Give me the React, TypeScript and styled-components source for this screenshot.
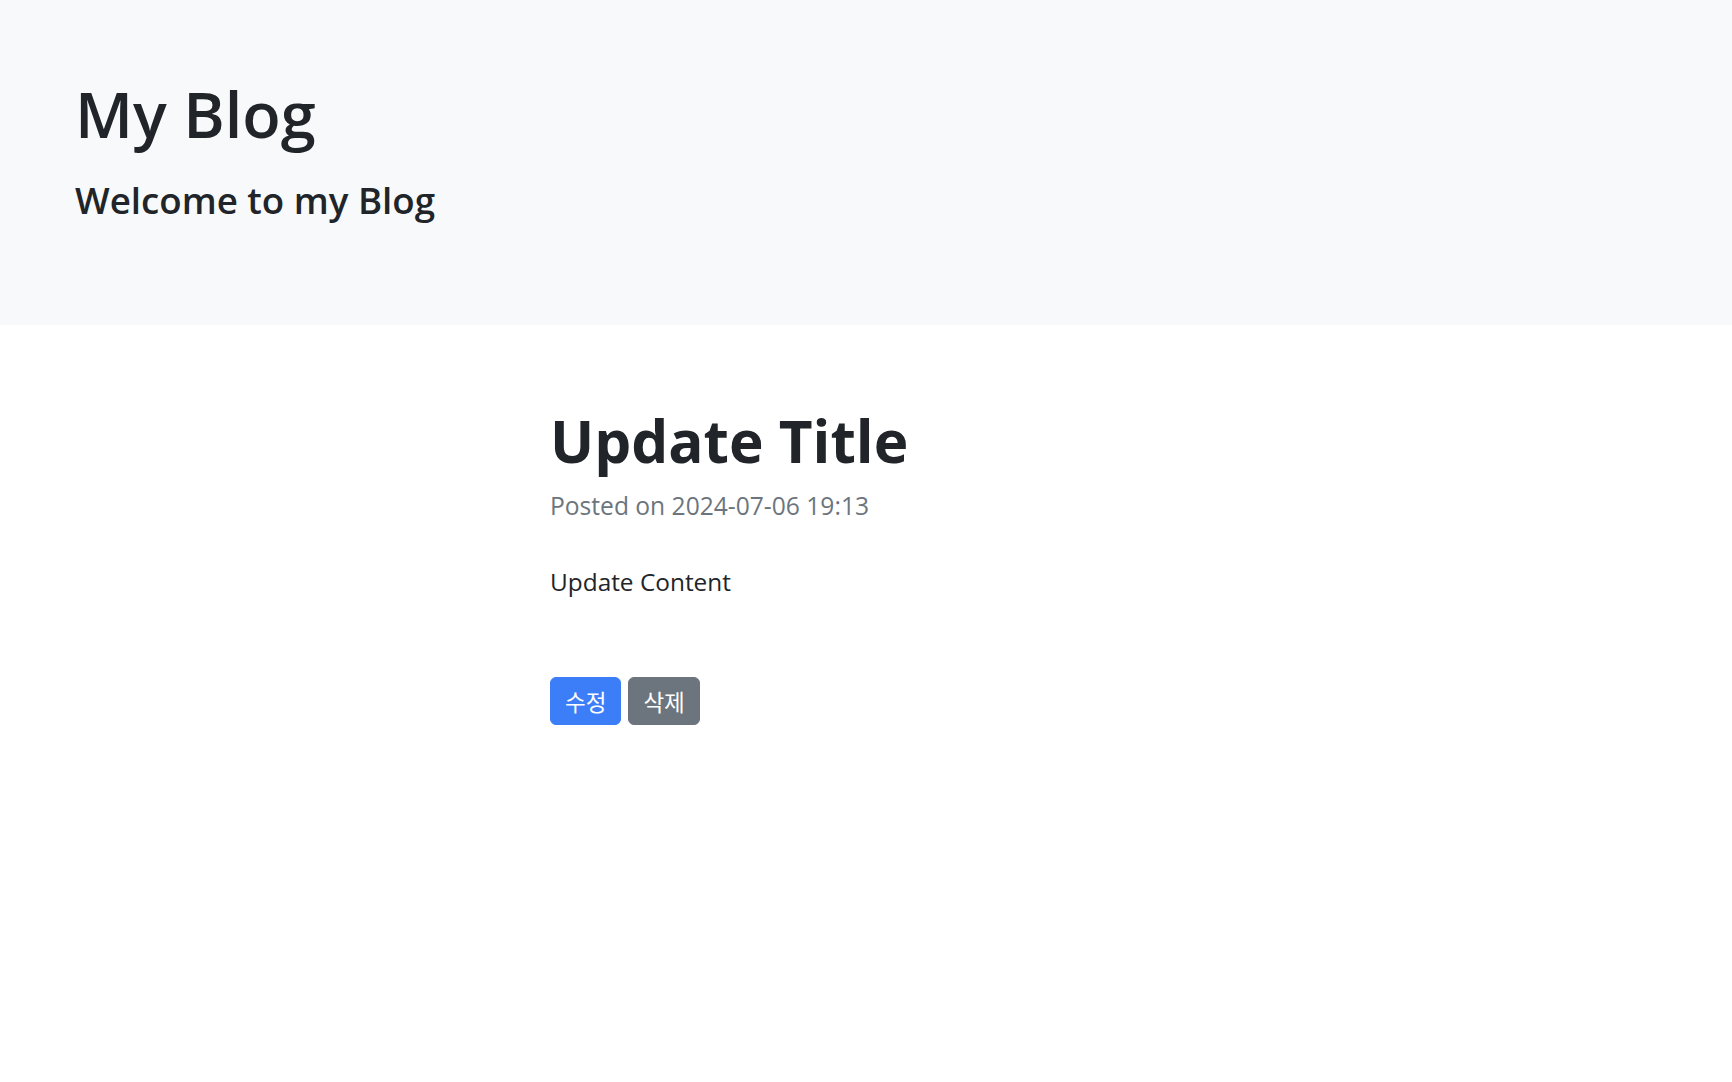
import React from "react";
import styled, { createGlobalStyle } from "styled-components";

const GlobalStyle = createGlobalStyle`
  html, body { margin: 0; padding: 0; background: #ffffff; }
  body {
    font-family: "Open Sans", "Noto Sans CJK KR", sans-serif;
    color: #212529;
    -webkit-font-smoothing: antialiased;
  }
  * { box-sizing: border-box; }
`;

const Header = styled.header`
  background: #f8f9fa;
  padding: 77px 0 102px 75px;
`;

const SiteTitle = styled.h1`
  margin: 0;
  font-size: 63px;
  line-height: 74.4px;
  font-weight: 600;
  color: #212529;
`;

const Tagline = styled.p`
  margin: 28px 0 0;
  font-size: 36.7px;
  line-height: 43.2px;
  font-weight: 600;
  color: #212529;
`;

const Main = styled.main`
  width: 632px;
  margin: 0 auto;
  padding-top: 80px;
`;

const PostTitle = styled.h2`
  margin: 0;
  font-size: 58.5px;
  line-height: 70px;
  font-weight: 700;
  color: #212529;
`;

const Meta = styled.div`
  margin-top: 13px;
  font-size: 24.6px;
  line-height: 36px;
  color: #6c757d;
`;

const Content = styled.p`
  margin: 40px 0 0;
  font-size: 24.4px;
  line-height: 36px;
  color: #212529;
`;

const Actions = styled.div`
  display: flex;
  gap: 7px;
  margin-top: 77px;
`;

const Button = styled.button<{ $variant: "primary" | "secondary" }>`
  font-family: "Noto Sans CJK KR", "Open Sans", sans-serif;
  font-size: 22.5px;
  line-height: 30px;
  padding: 8px 14px;
  border: 1px solid ${(p) => (p.$variant === "primary" ? "#3c7ef7" : "#6c757d")};
  background: ${(p) => (p.$variant === "primary" ? "#3c7ef7" : "#6c757d")};
  color: #ffffff;
  border-radius: 6px;
  cursor: pointer;
`;

export default function App() {
  return (
    <>
      <GlobalStyle />
      <Header>
        <SiteTitle>My Blog</SiteTitle>
        <Tagline>Welcome to my Blog</Tagline>
      </Header>
      <Main>
        <PostTitle>Update Title</PostTitle>
        <Meta>Posted on 2024-07-06 19:13</Meta>
        <Content>Update Content</Content>
        <Actions>
          <Button $variant="primary">수정</Button>
          <Button $variant="secondary">삭제</Button>
        </Actions>
      </Main>
    </>
  );
}
